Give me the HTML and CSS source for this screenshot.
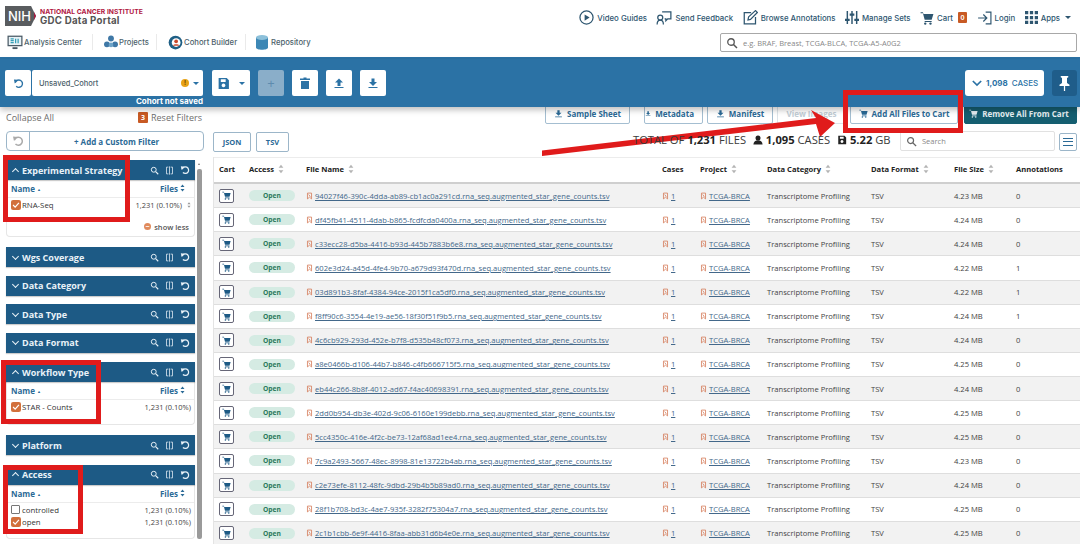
FILE: index.html
```html
<!DOCTYPE html>
<html lang="en">
<head>
<meta charset="utf-8">
<title>GDC Data Portal</title>
<link rel="stylesheet" href="styles.css">
</head>
<body>
<svg class="defs" width="0" height="0" aria-hidden="true">
  <symbol id="cart" viewBox="0 0 24 24"><path fill="currentColor" d="M1 2h4l1 3h17l-3 10H8L5 4H1zM8 17h12v2H8z"/><circle fill="currentColor" cx="9" cy="21.5" r="2"/><circle fill="currentColor" cx="18" cy="21.5" r="2"/></symbol>
  <symbol id="search" viewBox="0 0 24 24"><circle cx="10" cy="10" r="6.5" fill="none" stroke="currentColor" stroke-width="2.6"/><path d="M15 15l7 7" stroke="currentColor" stroke-width="3"/></symbol>
  <symbol id="split" viewBox="0 0 24 24"><path fill="none" stroke="currentColor" stroke-width="2" d="M9 3H4v18h5M15 3h5v18h-5M12 1v22"/></symbol>
  <symbol id="undo" viewBox="0 0 24 24"><path fill="none" stroke="currentColor" stroke-width="3" d="M5 10a8 8 0 1 1 2 8"/><path fill="currentColor" d="M2 3l9 1-7 8z"/></symbol>
  <symbol id="dl" viewBox="0 0 24 24"><path fill="currentColor" d="M9 3h6v7h5l-8 8-8-8h5zM3 20h18v2H3z"/></symbol>
  <symbol id="up" viewBox="0 0 24 24"><path fill="currentColor" d="M12 3l8 8h-5v7H9v-7H4zM3 20h18v2H3z"/></symbol>
  <symbol id="save" viewBox="0 0 24 24"><path fill="currentColor" d="M3 2h15l4 4v16H3zM7 4v5h9V4zM12 12a3.500 3.500 0 1 0 .01 0z"/></symbol>
  <symbol id="bm" viewBox="0 0 24 24"><path fill="none" stroke="currentColor" stroke-width="2.500" d="M5 2h14v20l-7-6-7 6zM9 7l6 7"/></symbol>
  <symbol id="sort" viewBox="0 0 10 16"><path fill="currentColor" d="M5 1l4 5H1zM5 15l4-5H1z"/></symbol>
  <symbol id="check" viewBox="0 0 24 24"><rect width="24" height="24" rx="5" fill="#d2703c"/><path d="M5 12l5 5 9-10" fill="none" stroke="#fff" stroke-width="3"/></symbol>
</svg>

<header class="top">
  <div class="top-row">
    <div class="logo">
      <div class="nih">NIH</div>
      <div class="logo-text"><div class="nci">NATIONAL CANCER INSTITUTE</div><div class="portal">GDC Data Portal</div></div>
    </div>
    <nav class="util">
      <a><svg width="15" height="15" viewBox="0 0 24 24"><circle cx="12" cy="12" r="10.500" fill="none" stroke="currentColor" stroke-width="2"/><path fill="currentColor" d="M9 7l8 5-8 5z"/></svg>Video Guides</a>
      <a><svg width="16" height="15" viewBox="0 0 24 24"><path fill="none" stroke="currentColor" stroke-width="2" d="M9 3h14v11h-5l-3 3v-3h-2"/><circle cx="6" cy="12" r="4" fill="none" stroke="currentColor" stroke-width="2"/><path fill="none" stroke="currentColor" stroke-width="2" d="M1 23c0-5 2-7 5-7s5 2 5 7"/></svg>Send Feedback</a>
      <a><svg width="15" height="15" viewBox="0 0 24 24"><path fill="none" stroke="currentColor" stroke-width="2" d="M13 4H2v18h18V11M9 11l11-10 3 3-11 11-4 1z"/></svg>Browse Annotations</a>
      <a><svg width="14" height="15" viewBox="0 0 24 24"><path fill="none" stroke="currentColor" stroke-width="2.500" d="M4 1v22M12 1v22M20 1v22"/><path fill="currentColor" d="M0 14h8v4H0zM8 5h8v4H8zM16 14h8v4h-8z"/></svg>Manage Sets</a>
      <a><svg class="ic-cart" width="14" height="14"><use href="#cart"/></svg>Cart<span class="badge">0</span></a>
      <a><svg width="15" height="14" viewBox="0 0 24 24"><path fill="none" stroke="currentColor" stroke-width="2" d="M1 12h14M10 6l6 6-6 6M14 2h9v20h-9"/></svg>Login</a>
      <a><svg width="13" height="13" viewBox="0 0 12 12"><path fill="currentColor" d="M0 0h3v3H0zM4.500 0h3v3h-3zM9 0h3v3H9zM0 4.500h3v3H0zM4.500 4.500h3v3h-3zM9 4.500h3v3H9zM0 9h3v3H0zM4.500 9h3v3h-3zM9 9h3v3H9z"/></svg>Apps<span class="caret"></span></a>
    </nav>
  </div>
  <div class="top-row second">
    <nav class="main-nav">
      <a class="w1"><svg width="16" height="15" viewBox="0 0 24 24"><rect x="1" y="2" width="22" height="15" fill="#e8f2f6" stroke="#4a5a66" stroke-width="2"/><path d="M5 6h5M5 9h5M5 12h5M13 6v7M17 6v7" stroke="#35a0b8" stroke-width="2"/><path d="M8 21h8" stroke="#4a5a66" stroke-width="3"/></svg>Analysis Center</a>
      <a class="w2"><svg width="14" height="14" viewBox="0 0 24 24"><circle cx="12" cy="6" r="5" fill="#3f78a6"/><circle cx="5" cy="16" r="5" fill="#3f78a6"/><circle cx="19" cy="16" r="5" fill="#3f78a6"/><circle cx="12" cy="17" r="4" fill="#6ea4c8"/></svg>Projects</a>
      <a class="w3"><svg width="15" height="15" viewBox="0 0 24 24"><circle cx="12" cy="12" r="11" fill="#1f5f85"/><circle cx="13" cy="12" r="7" fill="#fff"/><circle cx="13" cy="10" r="3" fill="#c8492c"/><path d="M8 17c1-3 9-3 10 0z" fill="#c8492c"/></svg>Cohort Builder</a>
      <a class="w4"><svg width="12" height="15" viewBox="0 0 24 30"><path fill="#3d87b5" d="M0 5v20c0 6 24 6 24 0V5z"/><ellipse cx="12" cy="5" rx="12" ry="5" fill="#8cc0da"/></svg>Repository</a>
    </nav>
    <div class="global-search"><svg width="12" height="12"><use href="#search"/></svg><span>e.g. BRAF, Breast, TCGA-BLCA, TCGA-A5-A0G2</span></div>
  </div>
</header>

<section class="band">
  <div class="band-left">
    <div class="cohort">
      <button class="sq sq-undo"><svg width="11" height="11"><use href="#undo"/></svg></button>
      <div class="cohort-name"><span>Unsaved_Cohort</span><i class="warn">!</i><span class="caret blue"></span></div>
      <button class="sq save"><svg width="13" height="13"><use href="#save"/></svg><span class="caret blue"></span></button>
      <button class="sq plus">+</button>
      <button class="sq"><svg width="10" height="12" viewBox="0 0 20 24"><path fill="currentColor" d="M0 3h7V1h6v2h7v3H0zM2 8h16v16H2z"/></svg></button>
      <button class="sq"><svg width="12" height="12"><use href="#up"/></svg></button>
      <button class="sq"><svg width="12" height="12"><use href="#dl"/></svg></button>
    </div>
    <div class="not-saved">Cohort not saved</div>
  </div>
  <div class="band-right">
    <button class="cases"><svg width="10" height="7" viewBox="0 0 12 8"><path d="M1 1l5 5 5-5" fill="none" stroke="currentColor" stroke-width="2"/></svg><b>1,098</b> CASES</button>
    <button class="pin"><svg width="13" height="15" viewBox="0 0 20 24"><path fill="#fff" d="M4 0h12v2l-2 1v8l4 3v2h-7v8h-2v-8H2v-2l4-3V3L4 2z"/></svg></button>
  </div>
</section>

<div class="body">
  <aside class="side">
    <div class="side-top"><span>Collapse All</span><span class="reset"><b>3</b>Reset Filters</span></div>
    <div class="custom"><span class="cu-undo"><svg width="12" height="12"><use href="#undo"/></svg></span><span class="cu-add">+ Add a Custom Filter</span></div>
    <div class="facets">
      <div class="facet open">
        <div class="fh"><span class="chev up"></span><span class="ft">Experimental Strategy</span><span class="tools"><svg width="9" height="9"><use href="#search"/></svg><svg width="9" height="9"><use href="#split"/></svg><svg width="10" height="10"><use href="#undo"/></svg></span></div>
        <div class="fsub"><span>Name <em>▲</em></span><span>Files <svg width="5" height="8"><use href="#sort"/></svg></span></div>
        <div class="fitem"><span class="lab"><svg width="10" height="10"><use href="#check"/></svg>RNA-Seq</span><span class="cnt">1,231 (0.10%)<svg width="4" height="8"><use href="#sort"/></svg></span></div>
        <div class="less"><i>−</i>show less</div>
      </div>
      <div class="facet"><div class="fh"><span class="chev"></span><span class="ft">Wgs Coverage</span><span class="tools"><svg width="9" height="9"><use href="#search"/></svg><svg width="9" height="9"><use href="#split"/></svg><svg width="10" height="10"><use href="#undo"/></svg></span></div></div>
      <div class="facet"><div class="fh"><span class="chev"></span><span class="ft">Data Category</span><span class="tools"><svg width="9" height="9"><use href="#search"/></svg><svg width="9" height="9"><use href="#split"/></svg><svg width="10" height="10"><use href="#undo"/></svg></span></div></div>
      <div class="facet"><div class="fh"><span class="chev"></span><span class="ft">Data Type</span><span class="tools"><svg width="9" height="9"><use href="#search"/></svg><svg width="9" height="9"><use href="#split"/></svg><svg width="10" height="10"><use href="#undo"/></svg></span></div></div>
      <div class="facet wide"><div class="fh"><span class="chev"></span><span class="ft">Data Format</span><span class="tools"><svg width="9" height="9"><use href="#search"/></svg><svg width="9" height="9"><use href="#split"/></svg><svg width="10" height="10"><use href="#undo"/></svg></span></div></div>
      <div class="facet open">
        <div class="fh"><span class="chev up"></span><span class="ft">Workflow Type</span><span class="tools"><svg width="9" height="9"><use href="#search"/></svg><svg width="9" height="9"><use href="#split"/></svg><svg width="10" height="10"><use href="#undo"/></svg></span></div>
        <div class="fsub"><span>Name <em>▲</em></span><span>Files <svg width="5" height="8"><use href="#sort"/></svg></span></div>
        <div class="fitem last"><span class="lab"><svg width="10" height="10"><use href="#check"/></svg>STAR - Counts</span><span>1,231 (0.10%)</span></div>
      </div>
      <div class="facet wide"><div class="fh"><span class="chev"></span><span class="ft">Platform</span><span class="tools"><svg width="9" height="9"><use href="#search"/></svg><svg width="9" height="9"><use href="#split"/></svg><svg width="10" height="10"><use href="#undo"/></svg></span></div></div>
      <div class="facet open">
        <div class="fh"><span class="chev up"></span><span class="ft">Access</span><span class="tools"><svg width="9" height="9"><use href="#search"/></svg><svg width="9" height="9"><use href="#split"/></svg><svg width="10" height="10"><use href="#undo"/></svg></span></div>
        <div class="fsub"><span>Name <em>▲</em></span><span>Files <svg width="5" height="8"><use href="#sort"/></svg></span></div>
        <div class="fitem"><span class="lab"><i class="box"></i>controlled</span><span>1,231 (0.10%)</span></div>
        <div class="fitem tight last"><span class="lab"><svg width="10" height="10"><use href="#check"/></svg>open</span><span>1,231 (0.10%)</span></div>
      </div>
      <div class="scroll"></div>
    </div>
  </aside>

  <main class="main">
    <div class="actions">
      <button class="act a1"><svg width="9" height="9"><use href="#dl"/></svg>Sample Sheet</button>
      <button class="act a2"><svg width="9" height="9"><use href="#dl"/></svg>Metadata</button>
      <button class="act a3"><svg width="9" height="9"><use href="#dl"/></svg>Manifest</button>
      <button class="act a4 dim">View Images</button>
      <button class="act a5"><svg width="9" height="9"><use href="#cart"/></svg>Add All Files to Cart</button>
      <button class="act a6"><svg width="9" height="9"><use href="#cart"/></svg>Remove All From Cart</button>
    </div>
    <div class="tools-row">
      <div class="fmt"><button>JSON</button><button>TSV</button></div>
      <div class="totals">TOTAL OF <b>1,231</b> FILES <svg width="10" height="10" viewBox="0 0 24 24"><circle cx="12" cy="7" r="6" fill="#222"/><path fill="#222" d="M1 23c0-14 22-14 22 0z"/></svg> <b>1,095</b> CASES <svg width="10" height="10"><use href="#save"/></svg> <b>5.22</b> GB</div>
      <div class="tsearch"><svg width="11" height="11"><use href="#search"/></svg><span>Search</span></div>
      <button class="menu"><i></i><i></i><i></i></button>
    </div>
    <div class="table">
      <div class="row head">
        <span>Cart</span><span>Access <svg width="6" height="10"><use href="#sort"/></svg></span><span>File Name <svg width="6" height="10"><use href="#sort"/></svg></span><span>Cases</span><span>Project <svg width="6" height="10"><use href="#sort"/></svg></span><span>Data Category <svg width="6" height="10"><use href="#sort"/></svg></span><span>Data Format <svg width="6" height="10"><use href="#sort"/></svg></span><span>File Size <svg width="6" height="10"><use href="#sort"/></svg></span><span>Annotations</span>
      </div>
      <div id="rows"></div>
    </div>
  </main>
</div>

<div class="mark m1"></div>
<div class="mark m2"></div>
<div class="mark m3"></div>
<div class="mark m4"></div>
<svg class="arrow" width="1080" height="544" viewBox="0 0 1080 544"><path fill="#e01b1b" d="M542 150.500L816 118L811 110L835 123L820 137L816 124L542 156z"/></svg>

<script src="app.js"></script>
</body>
</html>
```
FILE: styles.css
```css
* { box-sizing: border-box; }
html, body { margin: 0; height: 544px; overflow: hidden; }
body { font-family: "Open Sans", "Noto Sans", sans-serif; font-size: 8px; color: #333; background: #fff; position: relative; }
button { font: inherit; margin: 0; cursor: pointer; }
.defs { position: absolute; }

.top { height: 59px; border-bottom: 2px solid #2b72a5; display: flex; flex-direction: column; }
.top-row { display: flex; justify-content: space-between; }
.top-row:first-child { height: 30px; padding: 6px 9px 0 5px; }
.logo { display: flex; gap: 2px; }
.nih { width: 31px; height: 20px; background: #595c5f; color: #fff; font: 500 13px/20px Inter, sans-serif; padding-left: 3px; clip-path: polygon(0 0, 84% 0, 100% 50%, 84% 100%, 0 100%); border-right: 2px solid #a81b3f; }
.logo-text { padding-left: 2px; }
.nci { font: 700 6.750px/8px Inter, sans-serif; color: #b1173f; margin-top: 2px; }
.portal { font: 700 9.700px/11px Inter, sans-serif; color: #555; letter-spacing: .25px; margin-top: -1px; }
.util { display: flex; align-items: center; height: 23px; color: #2e5670; font: 500 7.800px Inter, sans-serif; }
.util a { display: flex; align-items: center; gap: 3px; margin-left: 9.500px; white-space: nowrap; }
.badge { background: #c85a24; color: #fff; font-size: 6px; font-weight: 700; width: 9px; height: 11px; border-radius: 1px; text-align: center; line-height: 11px; margin-left: 2px; }
.caret { width: 0; height: 0; border: 3px solid transparent; border-top: 3.500px solid currentColor; border-bottom: 0; margin-left: 2px; }
.caret.blue { color: #2b72a5; border-left-width: 3.500px; border-right-width: 3.500px; }
.second { height: 27px; padding-right: 3px; align-items: flex-start; }
.main-nav { display: flex; align-items: center; height: 24px; padding-left: 7px; font: 500 7.700px Inter, sans-serif; color: #4d5f6b; }
.main-nav a { display: flex; align-items: center; gap: 1px; white-space: nowrap; height: 16px; }
.w1 { width: 86px; margin-right: 11px; border-right: 1px solid #eaeaea; }
.w2 { width: 53px; margin-right: 11px; border-right: 1px solid #eaeaea; }
.w3 { width: 78px; margin-right: 10px; border-right: 1px solid #eaeaea; }
.main-nav .w4 { gap: 3px; }
.global-search { width: 357px; height: 19px; border: 1px solid #a8a8a8; border-radius: 2px; margin-top: 3px; display: flex; align-items: center; gap: 5px; padding-left: 5px; color: #555; font-size: 7.500px; }
.global-search span { color: #888; }

.band { height: 48px; background: #2b72a5; display: flex; justify-content: space-between; padding: 11px 3px 0 5px; box-shadow: 0 3px 6px rgba(0,0,0,.25); position: relative; z-index: 2; }
.cohort { display: flex; }
.sq { width: 26px; height: 26px; background: #fff; border: 0; border-radius: 2px; color: #2b72a5; display: flex; align-items: center; justify-content: center; margin-right: 8px; padding: 0; }
.sq-undo { margin-right: 1px; }
.cohort-name { width: 171px; height: 26px; background: #fff; border-radius: 2px; margin-right: 9px; display: flex; align-items: center; padding: 0 4px 0 7px; font: 500 7.500px Inter, sans-serif; color: #4d5f6b; }
.cohort-name > span:first-child { flex: 1; }
.warn { width: 8px; height: 8px; border-radius: 50%; background: #e8a317; color: #6b4500; font: 700 6px/8px Inter, sans-serif; text-align: center; margin-right: 2px; }
.save { width: 38px; gap: 7px; }
.plus { background: #8aaec9; color: #5d8bae; font-size: 13px; }
.not-saved { color: #fff; font: 700 8px/8px Inter, sans-serif; width: 198px; text-align: right; margin-top: 1px; white-space: nowrap; }
.band-right { display: flex; gap: 8px; margin-top: 0; }
.cases { width: 79px; height: 26px; background: #fff; border: 0; border-radius: 3px; color: #2b72a5; font: 500 8px Inter, sans-serif; display: flex; align-items: center; gap: 4px; padding: 0 0 0 7px; white-space: nowrap; }
.cases b { font-weight: 700; }
.pin { width: 25px; height: 26px; background: #1f5d8a; border: 0; border-radius: 3px; padding: 0; display: flex; align-items: center; justify-content: center; }

.body { display: flex; height: 437px; }
.side { width: 213px; flex: none; padding-left: 6px; }
.side-top { display: flex; height: 21px; align-items: center; font-size: 9px; color: #6d6d6d; }
.side-top > span:first-child { width: 132px; }
.reset { display: flex; align-items: center; gap: 3px; }
.reset b { width: 10px; height: 11px; background: #c85a24; color: #fff; font-size: 7px; text-align: center; line-height: 11px; border-radius: 1px; }
.custom { width: 198px; height: 20px; margin-top: 3px; border: 1px solid #9cb6c9; border-radius: 4px; display: flex; align-items: center; color: #2b6a96; font-weight: 700; font-size: 8px; }
.cu-undo { width: 23px; height: 18px; border-right: 1px solid #9cb6c9; display: flex; align-items: center; justify-content: center; color: #aaa; }
.cu-add { flex: 1; text-align: center; }
.facets { position: relative; margin-top: 9px; width: 197px; }
.facet { width: 189px; margin-bottom: 8.670px; }
.facet.wide { margin-bottom: 9.500px; }
.facet.open { border: 1px solid #e6e6e6; border-top: 0; border-radius: 0 0 4px 4px; margin-bottom: 10px; }
.facet.open .fh { margin: 0 -1px; }
.fh { height: 20px; background: #1d5a85; color: #e9f2f8; display: flex; align-items: center; padding: 0 5px; box-shadow: 0 1px 1px rgba(0,0,0,.2); }
.ft { flex: 1; font-weight: 700; font-size: 9px; margin-left: 4px; white-space: nowrap; }
.chev { width: 5px; height: 5px; border: solid #e9f2f8; border-width: 0 1.500px 1.500px 0; transform: rotate(45deg); margin: -2px 0 0 2px; }
.chev.up { transform: rotate(-135deg); margin-top: 2px; }
.tools { display: flex; gap: 6px; align-items: center; }
.fsub { display: flex; justify-content: space-between; height: 18px; padding: 0 9px 0 4px; align-items: center; color: #2b6a96; font-weight: 700; font-size: 8px; border-bottom: 1px solid #ececec; }
.fsub em { font-style: normal; font-size: 4px; vertical-align: 1px; }
.fitem { display: flex; justify-content: space-between; align-items: center; height: 14px; padding: 0 3px 0 4px; font-size: 7.500px; color: #444; }
.fitem.tight { height: 11px; }
.fitem.last { margin-bottom: 10px; }
.cnt { display: flex; align-items: center; gap: 5px; color: #444; }
.cnt svg { color: #999; }
.lab { display: flex; align-items: center; gap: 1px; color: #333; font-size: 7.800px; }
.box { width: 9px; height: 9px; border: 1px solid #777; border-radius: 1px; background: #fff; margin-right: 1px; }
.less { padding: 0 5px 4px 0; font-size: 7.500px; font-weight: 600; color: #555; margin-top: 9px; height: 15px; display: flex; justify-content: flex-end; align-items: center; gap: 3px; }
.less i { width: 7px; height: 7px; border-radius: 50%; background: #e08a5c; color: #fff; font: 700 7px/7px "Open Sans", sans-serif; text-align: center; }
.scroll { position: absolute; left: 191px; top: 9px; width: 5px; height: 370px; background: #9a9a9a; border-radius: 2px; }
.scroll::before { content: ""; position: absolute; left: 1px; top: -6px; border: 1.500px solid transparent; border-bottom: 2.500px solid #777; border-top: 0; }

.main { width: 867px; flex: none; position: relative; }
.actions { position: absolute; top: -5px; left: 332px; height: 22px; display: flex; align-items: stretch; }
.act { height: 22px; border: 1px solid #a4bed1; border-radius: 2px; background: #fff; color: #2b6a96; font-weight: 700; font-size: 8px; display: flex; align-items: center; justify-content: center; gap: 4px; padding: 0; white-space: nowrap; }
.a1 { width: 85px; margin-right: 14px; }
.a2 { width: 59px; margin-right: 4px; padding-right: 8px; }
.a3 { width: 66px; margin-right: 4px; }
.a4 { width: 69px; margin-right: 4px; }
.a5 { width: 108px; margin-right: 6px; }
.a6 { width: 113px; padding-right: 3px; background: #155e70; color: #e6eef2; border-color: #155e70; }
.dim { color: #c2cdd5; border-color: #dde4e9; }
.tools-row { height: 50px; position: relative; display: flex; align-items: center; }
.fmt { display: flex; gap: 5px; padding-top: 19px; }
.fmt button { height: 20px; padding: 0; background: #fff; border: 1px solid #9cb6c9; border-radius: 2px; color: #2b6a96; font-weight: 700; font-size: 7.500px; }
.fmt button:first-child { width: 38px; }
.fmt button:last-child { width: 33px; }
.totals { position: absolute; left: 420px; top: 25px; height: 16px; line-height: 16px; font-size: 11.200px; color: #3a3a3a; white-space: nowrap; z-index: 7; }
.totals b { font-weight: 700; color: #222; }
.totals svg { color: #222; margin-left: 4px; vertical-align: -1px; }
.tsearch { position: absolute; left: 687px; top: 24px; width: 155px; height: 20px; border: 1px solid #e1e1e1; border-radius: 2px; display: flex; align-items: center; gap: 5px; padding-left: 5px; color: #666; font-size: 7.500px; }
.tsearch span { color: #888; }
.menu { position: absolute; left: 846px; top: 26px; width: 18px; height: 18px; background: #fff; border: 1px solid #9cb6c9; border-radius: 2px; padding: 3px; display: flex; flex-direction: column; justify-content: space-around; }
.menu i { display: block; height: 1px; background: #2b6a96; }

.table { border-left: 1px solid #e4e4e4; }
.row { display: grid; grid-template-columns: 30px 57px 356px 38px 67px 104px 83px 62px 1fr; align-items: center; height: 24.130px; font-size: 7.600px; color: #444; padding-left: 5px; border-bottom: 1px solid #dedede; white-space: nowrap; }
.row.head { height: 27px; padding-bottom: 3px; color: #222; font-weight: 700; border-bottom: 2px solid #cfcfcf; border-top: 1px solid #ececec; }
.row.head span { display: flex; align-items: center; gap: 4px; }
.row.head svg { color: #b4b4b4; }
.row.odd { background: #f2f2f2; }
.cbtn { width: 15px; height: 14px; border: 1px solid #667; border-radius: 2px; background: #fff; color: #1d5a85; display: flex; align-items: center; justify-content: center; }
.pill { width: 46px; height: 11px; background: #d5ebe3; color: #2b7a5c; border-radius: 6px; font-weight: 700; font-size: 6.700px; line-height: 11px; text-align: center; display: block; }
.fl { display: flex; align-items: center; gap: 2px; }
.fl svg { color: #d2704a; flex: none; }
.fl a { color: #43688a; text-decoration: underline; }

.mark { position: absolute; border: 5px solid #e01b1b; z-index: 5; pointer-events: none; }
.m1 { left: 3px; top: 155px; width: 127px; height: 67px; }
.m2 { left: 1px; top: 360px; width: 100px; height: 64px; }
.m3 { left: 3px; top: 465px; width: 80px; height: 69px; }
.m4 { left: 843px; top: 90px; width: 120px; height: 43px; }
.arrow { position: absolute; left: 0; top: 0; z-index: 6; pointer-events: none; }
```
FILE: app.js
```js
const data = [
  ["94027f46-390c-4dda-ab89-cb1ac0a291cd", "4.23", 0],
  ["df45fb41-4511-4dab-b865-fcdfcda0400a", "4.24", 0],
  ["c33ecc28-d5ba-4416-b93d-445b7883b6e8", "4.24", 0],
  ["602e3d24-a45d-4fe4-9b70-a679d93f470d", "4.22", 1],
  ["03d891b3-8faf-4384-94ce-2015f1ca5df0", "4.22", 1],
  ["f8ff90c6-3554-4e19-ae56-18f30f51f9b5", "4.24", 1],
  ["4c6cb929-293d-452e-b7f8-d535b48cf073", "4.24", 0],
  ["a8e0466b-d106-44b7-b846-c4fb666715f5", "4.25", 0],
  ["eb44c266-8b8f-4012-ad67-f4ac40698391", "4.24", 0],
  ["2dd0b954-db3e-402d-9c06-6160e199debb", "4.25", 0],
  ["5cc4350c-416e-4f2c-be73-12af68ad1ee4", "4.25", 0],
  ["7c9a2493-5667-48ec-8998-81e13722b4ab", "4.23", 0],
  ["c2e73efe-8112-48fc-9dbd-29b4b5b89ad0", "4.24", 0],
  ["28f1b708-bd3c-4ae7-935f-3282f75304a7", "4.25", 0],
  ["2c1b1cbb-6e9f-4416-8faa-abb31d6b4e0e", "4.25", 0]
];
const bm = '<svg width="7" height="8"><use href="#bm"/></svg>';
document.getElementById("rows").innerHTML = data.map((d, i) => `
  <div class="row ${i % 2 ? "" : "odd"}">
    <span><span class="cbtn"><svg width="9" height="9"><use href="#cart"/></svg></span></span>
    <span><span class="pill">Open</span></span>
    <span class="fl">${bm}<a>${d[0]}.rna_seq.augmented_star_gene_counts.tsv</a></span>
    <span class="fl">${bm}<a>1</a></span>
    <span class="fl">${bm}<a>TCGA-BRCA</a></span>
    <span>Transcriptome Profiling</span>
    <span>TSV</span>
    <span>${d[1]} MB</span>
    <span>${d[2]}</span>
  </div>`).join("");
```
